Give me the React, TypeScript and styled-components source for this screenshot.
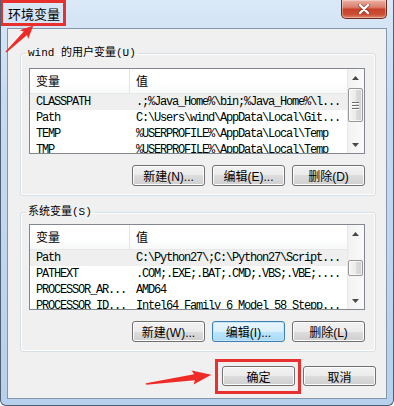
import React from 'react';
import styled, { createGlobalStyle } from 'styled-components';

const GlobalStyle = createGlobalStyle`
  html, body {
    margin: 0;
    padding: 0;
    background: #fff;
  }
  body {
    font-family: "Noto Sans CJK SC", sans-serif;
  }
`;

const cjk = `"Noto Sans CJK SC", sans-serif`;
const mono = `"Liberation Mono", "Noto Sans CJK SC", monospace`;
const ui = `"Liberation Sans", "Noto Sans CJK SC", sans-serif`;

const Window = styled.div`
  position: relative;
  width: 394px;
  height: 406px;
  box-sizing: border-box;
  display: flex;
  flex-direction: column;
  background: linear-gradient(180deg, #dae8f7 0%, #c6dbf1 25%, #b7d1ec 100%);
  border: 1px solid #4f5f72;
  border-top: none;
  border-radius: 0 0 6px 6px;
  overflow: hidden;
`;

const TitleBar = styled.div`
  height: 28px;
  flex: none;
  display: flex;
  align-items: flex-start;
`;

const Title = styled.div`
  padding: 6px 0 0 7px;
  font-family: ${cjk};
  font-size: 13px;
  line-height: 16px;
  color: #000;
`;

const CloseButton = styled.div`
  margin-left: auto;
  margin-right: 6px;
  width: 46px;
  height: 19px;
  box-sizing: border-box;
  display: flex;
  align-items: center;
  justify-content: center;
  border: 1px solid #6b2a20;
  border-top: none;
  border-radius: 0 0 5px 5px;
  background: linear-gradient(180deg, #eab0a3 0%, #dc7f6c 40%, #c8412a 52%, #cc4f36 80%, #e0866a 100%);
  box-shadow: inset 0 0 0 1px rgba(255, 255, 255, 0.35);
`;

const Client = styled.div`
  flex: 1;
  margin: 0 6px 6px 6px;
  border: 1px solid #8396ac;
  background: #f0f0f0;
  display: flex;
  flex-direction: column;
  padding: 0 10px 0 12px;
  min-height: 0;
`;

const Group = styled.fieldset<{ $gap: number; $padTop: number }>`
  margin: ${({ $gap }) => $gap}px 0 0 0;
  padding: ${({ $padTop }) => $padTop}px 10px 9px 8px;
  min-width: 0;
  border: 1px solid #d5dfe5;
  border-radius: 3px;
  box-shadow: inset 0 0 0 1px #fff;
`;

const Legend = styled.legend`
  margin-left: -3px;
  padding: 0 2px;
  font-family: ${mono};
  font-size: 11px;
  line-height: 14px;
  color: #000;
`;

const ListView = styled.div`
  height: 86px;
  box-sizing: border-box;
  border: 1px solid #828790;
  background: #fff;
  display: flex;
  overflow: hidden;
`;

const ListBody = styled.div`
  flex: 1;
  min-width: 0;
  overflow: hidden;
`;

const HeaderRow = styled.div`
  display: flex;
  height: 24px;
  border-bottom: 1px solid #e8e8e8;
  background: linear-gradient(180deg, #ffffff 0%, #ffffff 55%, #f7f8f9 100%);
`;

const HeaderCell = styled.div<{ $w?: number }>`
  ${({ $w }) => ($w ? `width: ${$w}px; border-right: 1px solid #e3e5e8;` : 'flex: 1;')}
  box-sizing: border-box;
  padding-left: 6px;
  font-family: ${cjk};
  font-size: 12px;
  line-height: 24px;
  color: #000;
`;

const Row = styled.div<{ $selected?: boolean }>`
  display: flex;
  height: 16px;
  background: ${({ $selected }) => ($selected ? '#efefef' : 'transparent')};
`;

const Cell = styled.div<{ $w?: number }>`
  ${({ $w }) => ($w ? `width: ${$w}px; flex: none;` : 'flex: 1; min-width: 0;')}
  box-sizing: border-box;
  padding-left: 6px;
  font-family: ${mono};
  font-size: 12px;
  letter-spacing: -1.2px;
  line-height: 16px;
  white-space: nowrap;
  overflow: hidden;
  color: #000;
`;

const ScrollBar = styled.div`
  width: 17px;
  flex: none;
  display: flex;
  flex-direction: column;
  background: linear-gradient(90deg, #e6e6e6 0px, #f3f3f3 2px, #fafafa 100%);
`;

const ArrowBox = styled.div`
  height: 17px;
  flex: none;
  display: flex;
  align-items: center;
  justify-content: center;
`;

const Thumb = styled.div<{ $top: number; $h: number }>`
  margin: ${({ $top }) => $top}px 1px 0 1px;
  height: ${({ $h }) => $h}px;
  box-sizing: border-box;
  border: 1px solid #979797;
  border-radius: 2px;
  background: linear-gradient(90deg, #f4f4f4 0%, #ebebeb 50%, #dcdcdc 50%, #d2d2d2 100%);
  box-shadow: inset 0 0 0 1px rgba(255, 255, 255, 0.7);
  display: flex;
  flex-direction: column;
  align-items: center;
  justify-content: center;
  gap: 2px;
`;

const Grip = styled.span`
  width: 7px;
  height: 1px;
  background: #707070;
  box-shadow: 0 1px 0 #fff;
`;

const Track = styled.div`
  flex: 1;
`;

const ButtonRow = styled.div<{ $top: number; $gap: number }>`
  display: flex;
  justify-content: flex-end;
  gap: ${({ $gap }) => $gap}px;
  margin-top: ${({ $top }) => $top}px;
`;

const Button = styled.div<{ $focused?: boolean; $h?: number }>`
  width: 73px;
  height: ${({ $h }) => $h ?? 21}px;
  box-sizing: border-box;
  display: flex;
  align-items: center;
  justify-content: center;
  border: 1px solid ${({ $focused }) => ($focused ? '#3c7fb1' : '#707070')};
  border-radius: 3px;
  background: ${({ $focused }) =>
    $focused
      ? 'linear-gradient(180deg, #eaf6fd 0%, #d9f0fc 50%, #bee6fd 50%, #a7d9f5 100%)'
      : 'linear-gradient(180deg, #f2f2f2 0%, #ebebeb 50%, #dddddd 50%, #cfcfcf 100%)'};
  box-shadow: inset 0 0 0 1px ${({ $focused }) => ($focused ? '#c4e5f6' : '#fcfcfc')};
  font-family: ${ui};
  font-size: 12px;
  color: #000;
  white-space: nowrap;
`;

const RedBox = styled.div<{ $x: number; $y: number; $w: number; $h: number }>`
  position: absolute;
  left: ${({ $x }) => $x}px;
  top: ${({ $y }) => $y}px;
  width: ${({ $w }) => $w}px;
  height: ${({ $h }) => $h}px;
  box-sizing: border-box;
  border: 3px solid #e8302f;
  pointer-events: none;
`;

const Overlay = styled.svg`
  position: absolute;
  left: -1px;
  top: 0;
  pointer-events: none;
`;

type Variable = { name: string; value: string; selected?: boolean };

const userVars: Variable[] = [
  { name: 'CLASSPATH', value: '.;%Java_Home%\\bin;%Java_Home%\\l...', selected: true },
  { name: 'Path', value: 'C:\\Users\\wind\\AppData\\Local\\Git...' },
  { name: 'TEMP', value: '%USERPROFILE%\\AppData\\Local\\Temp' },
  { name: 'TMP', value: '%USERPROFILE%\\AppData\\Local\\Temp' },
];

const systemVars: Variable[] = [
  { name: 'Path', value: 'C:\\Python27\\;C:\\Python27\\Script...', selected: true },
  { name: 'PATHEXT', value: '.COM;.EXE;.BAT;.CMD;.VBS;.VBE;....' },
  { name: 'PROCESSOR_AR...', value: 'AMD64' },
  { name: 'PROCESSOR_ID...', value: 'Intel64 Family 6 Model 58 Stepp...' },
];

const UpArrow = () => (
  <svg width="7" height="4" viewBox="0 0 7 4">
    <polygon points="3.5,0 7,4 0,4" fill="#4a4a4a" />
  </svg>
);

const DownArrow = () => (
  <svg width="7" height="4" viewBox="0 0 7 4">
    <polygon points="0,0 7,0 3.5,4" fill="#4a4a4a" />
  </svg>
);

const VarList = ({ rows, thumbTop, thumbHeight, grip }: { rows: Variable[]; thumbTop: number; thumbHeight: number; grip?: boolean }) => (
  <ListView>
    <ListBody>
      <HeaderRow>
        <HeaderCell $w={100}>变量</HeaderCell>
        <HeaderCell>值</HeaderCell>
      </HeaderRow>
      {rows.map((r) => (
        <Row key={r.name} $selected={r.selected}>
          <Cell $w={100}>{r.name}</Cell>
          <Cell>{r.value}</Cell>
        </Row>
      ))}
    </ListBody>
    <ScrollBar>
      <ArrowBox>
        <UpArrow />
      </ArrowBox>
      <Thumb $top={thumbTop} $h={thumbHeight}>
        {grip && (
          <>
            <Grip />
            <Grip />
            <Grip />
          </>
        )}
      </Thumb>
      <Track />
      <ArrowBox>
        <DownArrow />
      </ArrowBox>
    </ScrollBar>
  </ListView>
);

// red annotation arrow: tail at (x, y), pointing along angle
const Arrow = ({ x, y, angle, len, head, shaft, barb }: { x: number; y: number; angle: number; len: number; head: number; shaft: number; barb: number }) => {
  const b = len - head;
  const pts = [
    [0, -0.7],
    [b, -shaft],
    [b - 2, -barb],
    [len, 0],
    [b - 2, barb],
    [b, shaft],
    [0, 0.7],
  ]
    .map((p) => p.join(','))
    .join(' ');
  return <polygon points={pts} fill="#ee2b26" transform={`translate(${x} ${y}) rotate(${angle})`} />;
};

const App = () => {
  return (
    <>
      <GlobalStyle />
      <Window>
        <TitleBar>
          <Title>环境变量</Title>
          <CloseButton>
            <svg width="14" height="10" viewBox="0 0 14 10">
              <path d="M3 1 L11 9 M11 1 L3 9" stroke="#5a1d14" strokeWidth="4" strokeLinecap="round" opacity="0.45" />
              <path d="M3 1 L11 9 M11 1 L3 9" stroke="#fff" strokeWidth="2.4" strokeLinecap="round" />
            </svg>
          </CloseButton>
        </TitleBar>
        <Client>
          <Group $gap={17} $padTop={8}>
            <Legend>wind 的用户变量(U)</Legend>
            <VarList rows={userVars} thumbTop={2} thumbHeight={34} grip />
            <ButtonRow $top={11} $gap={7}>
              <Button>新建(N)...</Button>
              <Button>编辑(E)...</Button>
              <Button>删除(D)</Button>
            </ButtonRow>
          </Group>
          <Group $gap={9} $padTop={5}>
            <Legend>系统变量(S)</Legend>
            <VarList rows={systemVars} thumbTop={18} thumbHeight={16} />
            <ButtonRow $top={11} $gap={7}>
              <Button>新建(W)...</Button>
              <Button $focused>编辑(I)...</Button>
              <Button>删除(L)</Button>
            </ButtonRow>
          </Group>
          <ButtonRow $top={14} $gap={8}>
            <Button $h={20}>确定</Button>
            <Button $h={20}>取消</Button>
          </ButtonRow>
        </Client>

        <RedBox $x={-1} $y={0} $w={66} $h={26} />
        <RedBox $x={214} $y={359} $w={86} $h={35} />
        <Overlay width={394} height={406} viewBox="0 0 394 406">
          <Arrow x={6} y={52} angle={-44} len={38} head={11} shaft={2.4} barb={6} />
          <Arrow x={146} y={384} angle={-8} len={66} head={17} shaft={3} barb={7} />
        </Overlay>
      </Window>
    </>
  );
};

export default App;
